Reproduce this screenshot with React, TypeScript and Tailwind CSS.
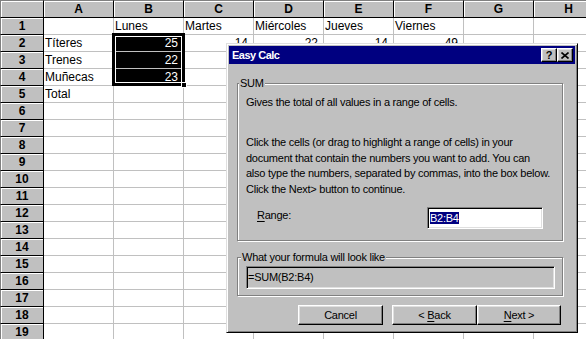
import React from 'react';

const COLS = ['A', 'B', 'C', 'D', 'E', 'F', 'G', 'H'];

type Cell = { text: string; num?: boolean };

const DATA: Record<number, Record<string, Cell>> = {
  1: {
    B: { text: 'Lunes' },
    C: { text: 'Martes' },
    D: { text: 'Miércoles' },
    E: { text: 'Jueves' },
    F: { text: 'Viernes' },
  },
  2: {
    A: { text: 'Títeres' },
    B: { text: '25', num: true },
    C: { text: '14', num: true },
    D: { text: '22', num: true },
    E: { text: '14', num: true },
    F: { text: '49', num: true },
  },
  3: { A: { text: 'Trenes' }, B: { text: '22', num: true } },
  4: { A: { text: 'Muñecas' }, B: { text: '23', num: true } },
  5: { A: { text: 'Total' } },
};

const raised =
  'bg-[#c0c0c0] border border-t-white border-l-white border-r-black border-b-black shadow-[inset_-1px_-1px_0_#808080,inset_1px_1px_0_#dfdfdf]';
const sunken =
  'border border-t-[#808080] border-l-[#808080] border-r-white border-b-white shadow-[inset_1px_1px_0_#000,inset_-1px_-1px_0_#dfdfdf]';
const etched = 'relative border border-[#808080] shadow-[inset_1px_1px_0_#fff,1px_1px_0_#fff]';

const isSelected = (row: number, col: string) => col === 'B' && row >= 2 && row <= 4;

const Sheet: React.FC = () => {
  const rows = Array.from({ length: 19 }, (_, i) => i + 1);
  return (
    <div className="flex flex-col w-max">
      {/* column headers */}
      <div className="flex h-[18px]">
        <div className="w-[44px] shrink-0 bg-[#c0c0c0] border-t border-l border-t-[#808080] border-l-[#808080] border-r border-b border-r-black border-b-black shadow-[inset_1px_1px_0_#fff]" />
        {COLS.map((c) => (
          <div
            key={c}
            className="w-[70px] shrink-0 flex items-center justify-center bg-[#c0c0c0] border-t border-t-[#808080] border-r border-b border-r-black border-b-black shadow-[inset_1px_1px_0_#fff] text-[12px] font-bold leading-none"
          >
            {c}
          </div>
        ))}
      </div>
      {rows.map((r) => (
        <div key={r} className="flex h-[17px]">
          <div className="w-[44px] shrink-0 flex items-center justify-center bg-[#c0c0c0] border-l border-l-[#808080] border-r border-b border-r-black border-b-black shadow-[inset_1px_1px_0_#fff] text-[12px] font-bold leading-none">
            {r}
          </div>
          {COLS.map((c) => {
            const cell = DATA[r]?.[c];
            const sel = isSelected(r, c);
            return (
              <div
                key={c}
                className={`w-[70px] shrink-0 border-r border-b border-[#c0c0c0] text-[12px] leading-[16px] whitespace-nowrap overflow-hidden ${
                  cell?.num ? 'text-right pr-[5px]' : 'pl-[1px]'
                } ${sel ? 'bg-black text-white' : 'text-black'}`}
              >
                {cell?.text}
              </div>
            );
          })}
        </div>
      ))}
    </div>
  );
};

const CloseGlyph: React.FC = () => (
  <svg width="8" height="7" viewBox="0 0 8 7">
    <path d="M0.5 0.5 L7.5 6.5 M7.5 0.5 L0.5 6.5" stroke="#000" strokeWidth="1.6" fill="none" />
  </svg>
);

const EasyCalcDialog: React.FC = () => (
  <div className="absolute left-[226px] top-[43px] w-[352px] h-[290px] bg-[#c0c0c0] border border-t-[#dfdfdf] border-l-[#dfdfdf] border-r-black border-b-black shadow-[inset_1px_1px_0_#fff,inset_-1px_-1px_0_#808080] p-[2px] flex flex-col text-[11px] tracking-[-0.25px] text-black">
    {/* title bar */}
    <div className="h-[18px] bg-[#000080] flex items-center justify-between pl-[3px] pr-[2px]">
      <span className="text-white font-bold text-[11px] tracking-[-0.5px] leading-none">Easy Calc</span>
      <div className="flex">
        <button className={`w-[16px] h-[14px] flex items-center justify-center font-bold text-[11px] leading-none ${raised}`}>
          ?
        </button>
        <button className={`w-[16px] h-[14px] flex items-center justify-center ${raised}`}>
          <CloseGlyph />
        </button>
      </div>
    </div>

    <div className="flex flex-col pl-[8px]">
      {/* SUM group */}
      <div className={`mt-[19px] w-[326px] h-[158px] px-[8px] pt-[10px] ${etched}`}>
        <span className="absolute left-[1px] -top-[8px] px-[1px] bg-[#c0c0c0] leading-[14px]">SUM</span>
        <p className="leading-[16px] whitespace-nowrap">Gives the total of all values in a range of cells.</p>
        <p className="mt-[25px] leading-[15.7px] whitespace-nowrap">
          Click the cells (or drag to highlight a range of cells) in your
          <br />
          document that contain the numbers you want to add. You can
          <br />
          also type the numbers, separated by commas, into the box below.
          <br />
          Click the Next&gt; button to continue.
        </p>
        <div className="mt-[9px] h-[22px] flex items-start justify-between pl-[11px] pr-[11px]">
          <span className="leading-[16px]">
            <span className="underline underline-offset-2">R</span>ange:
          </span>
          <div className={`w-[116px] h-[22px] bg-white pl-[2px] flex items-center ${sunken}`}>
            <span className="bg-[#000080] text-white leading-[12px]">B2:B4</span>
          </div>
        </div>
      </div>

      {/* formula preview group */}
      <div className={`mt-[16px] w-[326px] h-[39px] px-[8px] pt-[8px] ${etched}`}>
        <span className="absolute left-[3px] -top-[8px] px-[1px] bg-[#c0c0c0] leading-[14px] whitespace-nowrap">
          What your formula will look like
        </span>
        <div className={`w-[309px] h-[23px] pl-[1px] flex items-center ${sunken}`}>=SUM(B2:B4)</div>
      </div>

      {/* buttons */}
      <div className="mt-[9px] flex">
        <button className={`ml-[61px] w-[85px] h-[20px] flex items-center justify-center leading-none ${raised}`}>
          Cancel
        </button>
        <button className={`ml-[9px] w-[85px] h-[20px] flex items-center justify-center leading-none ${raised}`}>
          &lt;&nbsp;<span className="underline underline-offset-2">B</span>ack
        </button>
        <button className={`w-[84px] h-[20px] flex items-center justify-center leading-none ${raised}`}>
          <span className="underline underline-offset-2">N</span>ext&nbsp;&gt;
        </button>
      </div>
    </div>
  </div>
);

export default function App() {
  return (
    <div className="relative w-[586px] h-[339px] overflow-hidden bg-white font-['Liberation_Sans',Arial,sans-serif] text-black">
      <Sheet />

      {/* selection frame around B2:B4 */}
      <div className="absolute left-[112px] top-[33px] w-[73px] h-[53px] border-[3px] border-black">
        <div className="absolute inset-0 border border-white" />
      </div>
      <div className="absolute left-[181px] top-[82px] w-[6px] h-[6px] bg-black border border-white" />

      <EasyCalcDialog />
    </div>
  );
}
